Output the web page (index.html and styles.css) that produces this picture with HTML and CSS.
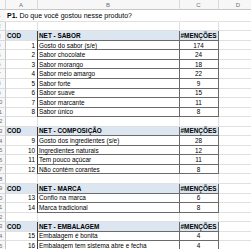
FILE: index.html
```html
<!DOCTYPE html>
<html>
<head>
<meta charset="utf-8">
<link rel="stylesheet" href="styles.css">
</head>
<body>
<div class="sheet">
  <div class="ch corner"></div><div class="ch">A</div><div class="ch">B</div><div class="ch">C</div><div class="ch">D</div>

  <div class="rh r-title">1</div><div class="c r-title title"><span><b>P1.</b> Do que você gostou nesse produto?</span></div><div class="c r-title"></div><div class="c r-title"></div><div class="c r-title"></div>

  <div class="rh">2</div><div class="c"></div><div class="c"></div><div class="c"></div><div class="c"></div>

  <div class="rh">3</div><div class="c hd">COD</div><div class="c hd tb">NET - SABOR</div><div class="c hd tc ctr">#MENÇÕES</div><div class="c"></div>
  <div class="rh">4</div><div class="c num">1</div><div class="c tb">Gosto do sabor (s/e)</div><div class="c tc ctr">174</div><div class="c"></div>
  <div class="rh">5</div><div class="c num">2</div><div class="c tb">Sabor chocolate</div><div class="c tc ctr">24</div><div class="c"></div>
  <div class="rh">6</div><div class="c num">3</div><div class="c tb">Sabor morango</div><div class="c tc ctr">18</div><div class="c"></div>
  <div class="rh">7</div><div class="c num">4</div><div class="c tb">Sabor meio amargo</div><div class="c tc ctr">22</div><div class="c"></div>
  <div class="rh">8</div><div class="c num">5</div><div class="c tb">Sabor forte</div><div class="c tc ctr">9</div><div class="c"></div>
  <div class="rh">9</div><div class="c num">6</div><div class="c tb">Sabor suave</div><div class="c tc ctr">15</div><div class="c"></div>
  <div class="rh">10</div><div class="c num">7</div><div class="c tb">Sabor marcante</div><div class="c tc ctr">11</div><div class="c"></div>
  <div class="rh">11</div><div class="c num">8</div><div class="c tb">Sabor único</div><div class="c tc ctr">8</div><div class="c"></div>

  <div class="rh">12</div><div class="c"></div><div class="c"></div><div class="c"></div><div class="c"></div>

  <div class="rh">13</div><div class="c hd">COD</div><div class="c hd tb">NET - COMPOSIÇÃO</div><div class="c hd tc ctr">#MENÇÕES</div><div class="c"></div>
  <div class="rh">14</div><div class="c num">9</div><div class="c tb">Gosto dos ingredientes (s/e)</div><div class="c tc ctr">28</div><div class="c"></div>
  <div class="rh">15</div><div class="c num">10</div><div class="c tb">Ingredientes naturais</div><div class="c tc ctr">12</div><div class="c"></div>
  <div class="rh">16</div><div class="c num">11</div><div class="c tb">Tem pouco açúcar</div><div class="c tc ctr">11</div><div class="c"></div>
  <div class="rh">17</div><div class="c num">12</div><div class="c tb">Não contém corantes</div><div class="c tc ctr">8</div><div class="c"></div>

  <div class="rh">18</div><div class="c"></div><div class="c"></div><div class="c"></div><div class="c"></div>

  <div class="rh">19</div><div class="c hd">COD</div><div class="c hd tb">NET - MARCA</div><div class="c hd tc ctr">#MENÇÕES</div><div class="c"></div>
  <div class="rh">20</div><div class="c num">13</div><div class="c tb">Confio na marca</div><div class="c tc ctr">6</div><div class="c"></div>
  <div class="rh">21</div><div class="c num">14</div><div class="c tb">Marca tradicional</div><div class="c tc ctr">8</div><div class="c"></div>

  <div class="rh">22</div><div class="c"></div><div class="c"></div><div class="c"></div><div class="c"></div>

  <div class="rh">23</div><div class="c hd">COD</div><div class="c hd tb">NET - EMBALAGEM</div><div class="c hd tc ctr">#MENÇÕES</div><div class="c"></div>
  <div class="rh">24</div><div class="c num">15</div><div class="c tb">Embalagem é bonita</div><div class="c tc ctr">4</div><div class="c"></div>
  <div class="rh">25</div><div class="c num">16</div><div class="c tb">Embalagem tem sistema abre e fecha</div><div class="c tc ctr">4</div><div class="c"></div>
  <div class="rh">26</div><div class="c"></div><div class="c"></div><div class="c"></div><div class="c"></div>
</div>
</body>
</html>
```
FILE: styles.css
```css
html, body {
  margin: 0;
  padding: 0;
  background: #ffffff;
  overflow: hidden;
}
.sheet {
  margin-left: -6.5px;
  display: grid;
  grid-template-columns: 12px 32px 142px 39px 40px;
  grid-template-rows: 10px 11.7px;
  grid-auto-rows: 9.55px;
  font-family: "Liberation Sans", Arial, sans-serif;
  font-size: 6.4px;
  color: #000;
  width: 265px;
}
.ch {
  background: #f7f7f7;
  color: #707070;
  text-align: center;
  line-height: 10px;
  font-size: 6px;
  border-right: 1px solid #dadada;
  border-bottom: 1px solid #c6c6c6;
  box-sizing: border-box;
}
.rh {
  background: #f7f7f7;
  color: #707070;
  text-align: center;
  font-size: 6px;
  border-right: 1px solid #c6c6c6;
  border-bottom: 1px solid #dadada;
  box-sizing: border-box;
  display: flex;
  align-items: center;
  justify-content: center;
  overflow: hidden;
  white-space: nowrap;
}
.c {
  box-sizing: border-box;
  border-right: 1px solid #e0e0e0;
  border-bottom: 1px solid #e0e0e0;
  padding: 0 1.5px;
  display: flex;
  align-items: center;
  white-space: nowrap;
  overflow: visible;
}
.title {
  font-size: 7px;
  z-index: 1;
}
.r-title {
  border-right-color: transparent;
}
.num {
  justify-content: flex-end;
}
.hd {
  background: #dce6f1;
  font-weight: bold;
}
.tb {
  border-left: 1px solid #3a3a3a;
  margin-left: -1px;
  border-bottom: 1px solid #6a6a6a;
  border-right: 1px solid #6a6a6a;
}
.tc {
  border-bottom: 1px solid #6a6a6a;
  border-right: 1px solid #6a6a6a;
}
.ctr {
  justify-content: center;
}
```
